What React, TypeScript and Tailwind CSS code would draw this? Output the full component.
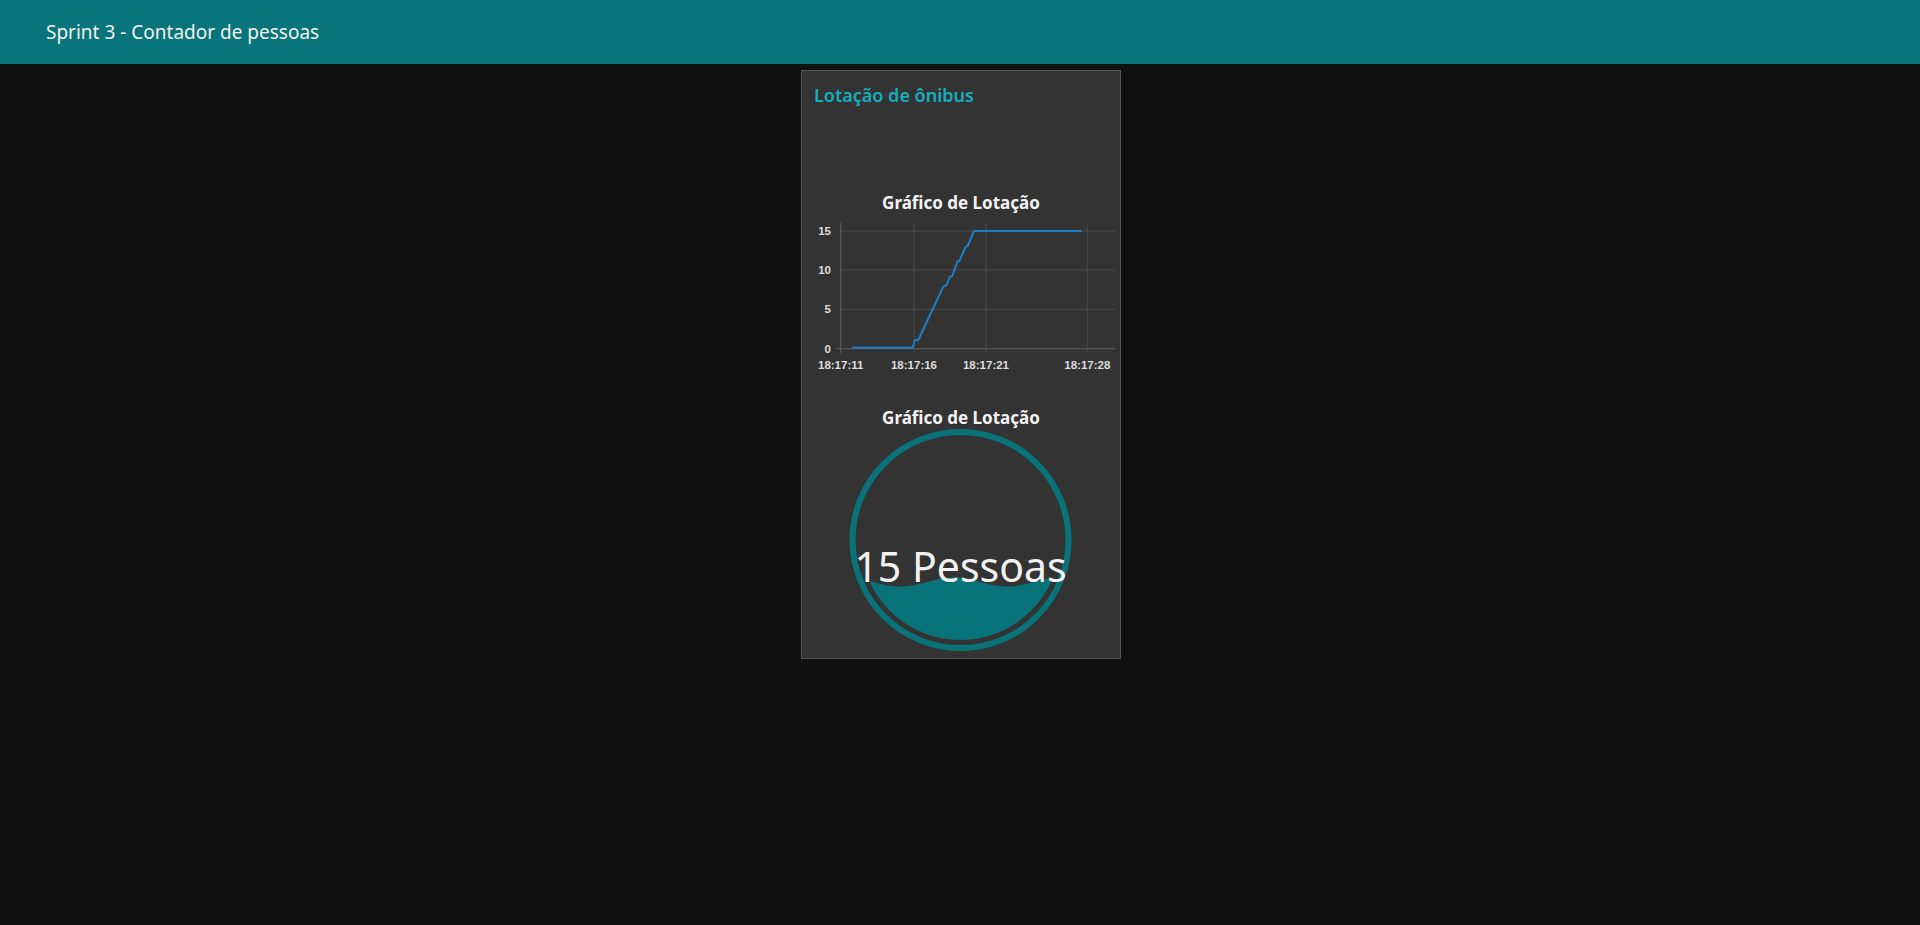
const linePoints = [
  [49.7, 133.7], [110.7, 133.7], [113, 126], [116.3, 126], [141.3, 72.7], [144.7, 71],
  [148, 62.7], [150.3, 62], [155.3, 47.7], [157.3, 47], [163.7, 32.7], [165.7, 32],
  [172, 17], [279.7, 17],
]

const yTicks = [
  { label: '15', y: 17 },
  { label: '10', y: 56 },
  { label: '5', y: 95.3 },
  { label: '0', y: 134.7 },
]

const xTicks = [
  { label: '18:17:11', x: 38.7 },
  { label: '18:17:16', x: 112 },
  { label: '18:17:21', x: 184 },
  { label: '18:17:28', x: 285.3 },
]

function LineChart() {
  return (
    <svg width="318" height="193" viewBox="0 0 318 193" className="block">
      {yTicks.map((t) => (
        <line key={t.label} x1="38.7" x2="313" y1={t.y} y2={t.y} stroke="#4a4a4a" strokeWidth="1" />
      ))}
      {xTicks.map((t) => (
        <line key={t.label} x1={t.x} x2={t.x} y1="9" y2="139" stroke="#4a4a4a" strokeWidth="1" />
      ))}
      <line x1="38.7" x2="38.7" y1="9" y2="139" stroke="#5a5a5a" strokeWidth="1" />
      <line x1="34" x2="313" y1="134.7" y2="134.7" stroke="#5a5a5a" strokeWidth="1" />
      {yTicks.map((t) => (
        <text
          key={t.label}
          x="29"
          y={t.y + 4}
          textAnchor="end"
          fill="#dddddd"
          fontSize="11.5"
          fontWeight="700"
          fontFamily="'Liberation Sans', Arial, sans-serif"
        >
          {t.label}
        </text>
      ))}
      {xTicks.map((t) => (
        <text
          key={t.label}
          x={t.x}
          y="155"
          textAnchor="middle"
          fill="#dddddd"
          fontSize="11.5"
          fontWeight="700"
          fontFamily="'Liberation Sans', Arial, sans-serif"
        >
          {t.label}
        </text>
      ))}
      <polyline
        points={linePoints.map((p) => p.join(',')).join(' ')}
        fill="none"
        stroke="#1f7fc4"
        strokeWidth="2"
        strokeLinejoin="round"
      />
    </svg>
  )
}

function LiquidGauge() {
  const cx = 158.5
  const cy = 111
  const pts: string[] = []
  for (let x = 50; x <= 270; x += 3) {
    const y = 153 + 4.5 * Math.cos((2 * Math.PI * (x - 98)) / 107)
    pts.push(`${x},${y.toFixed(2)}`)
  }
  const wave = `M ${pts.join(' L ')} L 270,230 L 50,230 Z`

  return (
    <svg width="318" height="222" viewBox="0 0 318 222" className="block">
      <defs>
        <clipPath id="fillClip">
          <circle cx={cx} cy={cy} r="100" />
        </clipPath>
      </defs>
      <circle cx={cx} cy={cy} r="108" fill="none" stroke="#087479" strokeWidth="6" />
      <path d={wave} fill="#087479" clipPath="url(#fillClip)" />
      <text
        x={cx}
        y="153"
        textAnchor="middle"
        fill="#f2f2f2"
        fontSize="41"
        fontFamily="'Noto Sans', 'Open Sans', sans-serif"
      >
        15 Pessoas
      </text>
    </svg>
  )
}

export default function App() {
  return (
    <div className="min-h-screen bg-[#111111] font-['Noto_Sans','Open_Sans',sans-serif]">
      <header className="h-16 bg-[#097479] flex items-center pl-[46px]">
        <h1 className="text-[19px] text-[#f0f0f0]">Sprint 3 - Contador de pessoas</h1>
      </header>

      <div className="flex justify-center pt-[6px] pl-[2px]">
        <div className="w-[320px] h-[589px] border border-[#555555] bg-[#333333] flex flex-col">
          <div className="h-[121px] px-3 pt-3">
            <h2 className="text-[18px] leading-6 font-semibold text-[#16aebd]">Lotação de ônibus</h2>
          </div>

          <p className="h-[22px] leading-[22px] text-center text-[17px] font-bold text-[#f2f2f2]">
            Gráfico de Lotação
          </p>
          <LineChart />

          <p className="h-[22px] leading-[22px] text-center text-[17px] font-bold text-[#f2f2f2]">
            Gráfico de Lotação
          </p>
          <LiquidGauge />
        </div>
      </div>
    </div>
  )
}
